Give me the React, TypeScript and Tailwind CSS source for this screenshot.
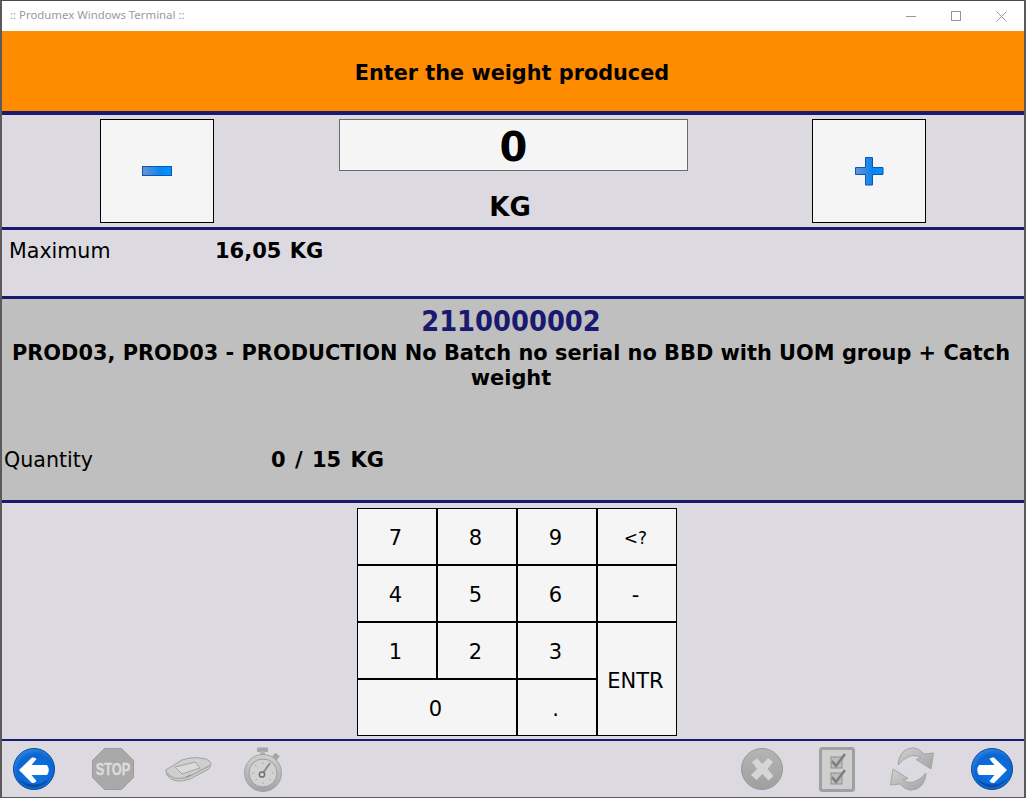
import React from 'react';

const keys = [
  { label: '7' },
  { label: '8' },
  { label: '9' },
  { label: '<?', small: true },
  { label: '4' },
  { label: '5' },
  { label: '6' },
  { label: '-' },
  { label: '1' },
  { label: '2' },
  { label: '3' },
  { label: 'ENTR', span: 'row-span-2' },
  { label: '0', span: 'col-span-2' },
  { label: '.' },
];

const ArrowButton: React.FC<{ id: string; flip?: boolean }> = ({ id, flip }) => (
  <svg width="42" height="42" viewBox="0 0 42 42">
    <defs>
      <radialGradient id={id} cx="0.55" cy="0.6" r="0.65">
        <stop offset="0" stopColor="#0b78e6" />
        <stop offset="0.7" stopColor="#0c66d2" />
        <stop offset="1" stopColor="#3a8fe8" />
      </radialGradient>
    </defs>
    <circle cx="21" cy="21" r="20.5" fill={`url(#${id})`} stroke="#0a4a9e" strokeWidth="1" />
    <path d="M6 31 Q21 42 36 31 Q30 39 21 39.5 Q12 39 6 31 Z" fill="#0a4a9e" />
    <g transform={flip ? 'translate(42 0) scale(-1 1)' : undefined}>
      <path d="M6 22 L19 9.5 Q22 9 23.5 11 L18.5 17 L34 17 Q37.5 22 34 27 L18.5 27 L23.5 33 Q22 35.5 19 35 Z" fill="#fff" />
    </g>
  </svg>
);

const StopIcon = () => (
  <svg width="42" height="42" viewBox="0 0 42 42">
    <path d="M12.5 0.5 H29.5 L41.5 12.5 V29.5 L29.5 41.5 H12.5 L0.5 29.5 V12.5 Z" fill="#a9a9a9" stroke="#9b9b9b" />
    <text transform="translate(21 26.5) scale(0.8 1)" textAnchor="middle" fontSize="16" fontWeight="700" fill="#dcdcdc" stroke="#dcdcdc" strokeWidth="0.4" fontFamily="'Liberation Sans', sans-serif">STOP</text>
  </svg>
);

const DeviceIcon = () => (
  <svg width="47" height="25" viewBox="0 0 47 25">
    <path d="M0.8 13 L17 3 Q24 0.5 32 0.6 L41 2 Q46 4 46 7.5 Q45 11 43 12.5 L25 22 Q18 24.5 12 24 Q5 23 2 18 Z" fill="#cfcfcf" stroke="#9f9f9f" />
    <path d="M10 10 L30 5 L35 11 L17 17 Z" fill="#dadada" stroke="#a2a2a2" />
    <path d="M2 16 Q6 21 13 21.5 Q19 22 25 19 L45 8.5" fill="none" stroke="#adadad" strokeWidth="1.5" />
    <path d="M21 20 L26 18" stroke="#8f8f8f" />
  </svg>
);

const TimerIcon = () => (
  <svg width="38" height="45" viewBox="0 0 38 45">
    <defs>
      <linearGradient id="timerBody" x1="0" y1="0" x2="0" y2="1">
        <stop offset="0" stopColor="#d0d0d0" />
        <stop offset="1" stopColor="#a3a3a3" />
      </linearGradient>
    </defs>
    <rect x="13" y="0.5" width="11" height="4.5" rx="1" fill="#a6a6a6" />
    <rect x="16" y="4" width="5" height="5" fill="#b5b5b5" />
    <rect x="29" y="7" width="6" height="5" rx="1" transform="rotate(40 32 9.5)" fill="#a6a6a6" />
    <circle cx="19" cy="26" r="18.5" fill="url(#timerBody)" stroke="#a2a2a2" />
    <circle cx="19" cy="26" r="14" fill="#d2d2d2" stroke="#9e9e9e" />
    <path d="M19 26 L26 16" stroke="#8b8b8b" strokeWidth="2" />
    <circle cx="18" cy="27.5" r="2.6" fill="#d8d8d8" stroke="#6f6f6f" strokeWidth="1.5" />
    <path d="M8 26 H10 M19 15 V17 M28 26 H30 M19 35 V37 M11 18 L12.5 19.5 M26.5 33.5 L25 32 M11.5 33.5 L13 32" stroke="#a5a5a5" />
  </svg>
);

const CancelIcon = () => (
  <svg width="42" height="42" viewBox="0 0 42 42">
    <defs>
      <linearGradient id="cancelFill" x1="0" y1="0" x2="0" y2="1">
        <stop offset="0" stopColor="#b5b5b5" />
        <stop offset="1" stopColor="#9f9f9f" />
      </linearGradient>
    </defs>
    <circle cx="21" cy="21" r="20.5" fill="url(#cancelFill)" stroke="#999" />
    <path d="M11 14 L16 10.5 L21.5 16 L27 10 L32 14 L26.5 21 L32.5 28 L27.5 32.5 L21.5 26 L15.5 32 L10 27 L16 21 Z" fill="#d6d6d6" />
  </svg>
);

const ChecklistIcon = () => (
  <svg width="36" height="45" viewBox="0 0 36 45">
    <rect x="1.5" y="1.5" width="33" height="42" rx="2" fill="#cfcfcf" stroke="#a0a0a0" strokeWidth="3" />
    <rect x="12" y="10" width="11" height="11" fill="#bdbdbd" stroke="#8f8f8f" />
    <rect x="12" y="26" width="11" height="11" fill="#bdbdbd" stroke="#8f8f8f" />
    <path d="M13 14 L17 19 L26 7 M13 30 L17 35 L26 23" fill="none" stroke="#7e7e7e" strokeWidth="2.5" />
  </svg>
);

const RefreshIcon = () => (
  <svg width="44" height="44" viewBox="0 0 44 44">
    <defs>
      <linearGradient id="refreshFill" x1="0" y1="0" x2="1" y2="1">
        <stop offset="0" stopColor="#d0d0d0" />
        <stop offset="1" stopColor="#a4a4a4" />
      </linearGradient>
    </defs>
    <path d="M8 18 Q9 2 23 0.8 Q29 1 34 7 L43.5 6 L41 22 L26 12.5 L31 11 Q25 7 19 9.5 Q13 12 8 18 Z" fill="url(#refreshFill)" stroke="#a5a5a5" />
    <path d="M36 26 Q35 42 21 43.2 Q15 43 10 37 L0.5 38 L3 22 L18 31.5 L13 33 Q19 37 25 34.5 Q31 32 36 26 Z" fill="url(#refreshFill)" stroke="#a5a5a5" />
  </svg>
);

export default function App() {
  return (
    <div className="w-[1026px] h-[798px] bg-white border-t border-x-2 border-b border-t-[#4a4a4a] border-x-[#5a5a5a] border-b-[#5a5a5a] flex flex-col overflow-hidden font-['DejaVu_Sans',sans-serif] text-black">
      {/* Title bar */}
      <div className="h-[30px] shrink-0 bg-white flex items-center justify-between">
        <span className="pl-[8px] pb-[2px] text-[11.4px] text-[#9a9a9f] font-['Noto_Sans',sans-serif]">:: Produmex Windows Terminal ::</span>
        <div className="flex items-center gap-[35px] pr-[17px] text-[#9a9a9a]">
          <svg width="10" height="10" viewBox="0 0 10 10"><path d="M0 5.5 H10" stroke="currentColor" /></svg>
          <svg width="10" height="10" viewBox="0 0 10 10"><rect x="0.5" y="0.5" width="9" height="9" fill="none" stroke="currentColor" /></svg>
          <svg width="11" height="11" viewBox="0 0 11 11"><path d="M0.5 0.5 L10.5 10.5 M10.5 0.5 L0.5 10.5" stroke="currentColor" /></svg>
        </div>
      </div>

      {/* Header */}
      <div className="h-[84px] shrink-0 bg-[#ff8c00] border-b-4 border-[#191970] flex items-center justify-center">
        <span className="text-[20.8px] font-bold leading-none pt-[4px] pr-[2px]">Enter the weight produced</span>
      </div>

      {/* Weight entry */}
      <div className="h-[115px] shrink-0 bg-[#dcdae0] border-b-[3px] border-[#191970] flex items-start pt-[4px] pl-[98px]">
        <button className="w-[114px] h-[104px] bg-[#f5f5f5] border border-black flex items-center justify-center">
          <svg width="30" height="10" viewBox="0 0 30 10">
            <defs>
              <linearGradient id="minusFill" x1="0" y1="0" x2="1" y2="0">
                <stop offset="0" stopColor="#6f93cf" />
                <stop offset="0.6" stopColor="#0a86ec" />
                <stop offset="1" stopColor="#0095ff" />
              </linearGradient>
            </defs>
            <rect x="0.5" y="0.5" width="29" height="9" fill="url(#minusFill)" stroke="#0b55b5" />
          </svg>
        </button>
        <div className="ml-[125px] w-[349px] flex flex-col items-center">
          <div className="w-full h-[52px] bg-[#f5f5f5] border border-[#6b6b6b] flex items-center justify-center text-[40px] font-bold leading-none pt-[4px]">0</div>
          <div className="mt-[19px] w-[349px] pr-[7px] text-center text-[26px] font-bold leading-[34px]">KG</div>
        </div>
        <button className="ml-[124px] w-[114px] h-[104px] bg-[#f5f5f5] border border-black flex items-center justify-center">
          <svg width="29" height="29" viewBox="0 0 29 29">
            <defs>
              <linearGradient id="plusFill" x1="0" y1="0" x2="1" y2="0">
                <stop offset="0" stopColor="#6f93cf" />
                <stop offset="0.6" stopColor="#0a86ec" />
                <stop offset="1" stopColor="#0095ff" />
              </linearGradient>
            </defs>
            <path d="M10.5 0.5 H17.5 V10.5 H28 V17.5 H17.5 V28 H10.5 V17.5 H0.5 V10.5 H10.5 Z" fill="url(#plusFill)" stroke="#0b55b5" />
          </svg>
        </button>
      </div>

      {/* Maximum */}
      <div className="h-[69px] shrink-0 bg-[#dcdae0] border-b-[3px] border-[#191970] flex items-start pt-[7px] pl-[7px] leading-[28px]">
        <span className="w-[206px] text-[20.6px]">Maximum</span>
        <span className="font-bold text-[21px] [word-spacing:1px]">16,05 KG</span>
      </div>

      {/* Production order */}
      <div className="h-[204px] shrink-0 bg-[#bfbfbf] border-b-[3px] border-[#191970] flex flex-col">
        <div className="mt-[4px] pr-[4px] text-center text-[28.7px] leading-[36px] font-bold text-[#191970] font-['DejaVu_Sans_Condensed','DejaVu_Sans',sans-serif]">2110000002</div>
        <div className="mt-[2px] pl-[4px] pr-[8px] text-center text-[20.9px] leading-[25px] font-bold">
          PROD03, PROD03 - PRODUCTION No Batch no serial no BBD with UOM group + Catch weight
        </div>
        <div className="mt-[55px] flex pl-[2px] leading-[28px]">
          <span className="w-[267px] text-[20.6px]">Quantity</span>
          <span className="font-bold text-[21px] [word-spacing:2px]">0 / 15 KG</span>
        </div>
      </div>

      {/* Keypad */}
      <div className="h-[238px] shrink-0 bg-[#dcdae0] border-b-2 border-[#191970] flex justify-center pt-[5px] pl-[8px]">
        <div className="grid grid-cols-[repeat(4,80px)] grid-rows-[repeat(4,57px)] h-[228px]">
          {keys.map((k) => (
            <button
              key={k.label}
              className={`bg-[#f5f5f5] border border-black flex items-center justify-center leading-none pr-[3px] pt-[4px] ${k.small ? 'text-[17px]' : 'text-[21px]'} ${k.span ?? ''}`}
            >
              {k.label}
            </button>
          ))}
        </div>
      </div>

      {/* Footer toolbar */}
      <div className="flex-1 bg-[#dcdae0] flex items-center justify-between pl-[11px] pr-[11px]">
        <div className="flex items-center">
          <ArrowButton id="backFill" />
          <div className="ml-[37px]"><StopIcon /></div>
          <div className="ml-[31px]"><DeviceIcon /></div>
          <div className="ml-[32px]"><TimerIcon /></div>
        </div>
        <div className="flex items-center">
          <CancelIcon />
          <div className="ml-[36px]"><ChecklistIcon /></div>
          <div className="ml-[35px]"><RefreshIcon /></div>
          <div className="ml-[37px]"><ArrowButton id="nextFill" flip /></div>
        </div>
      </div>
    </div>
  );
}
